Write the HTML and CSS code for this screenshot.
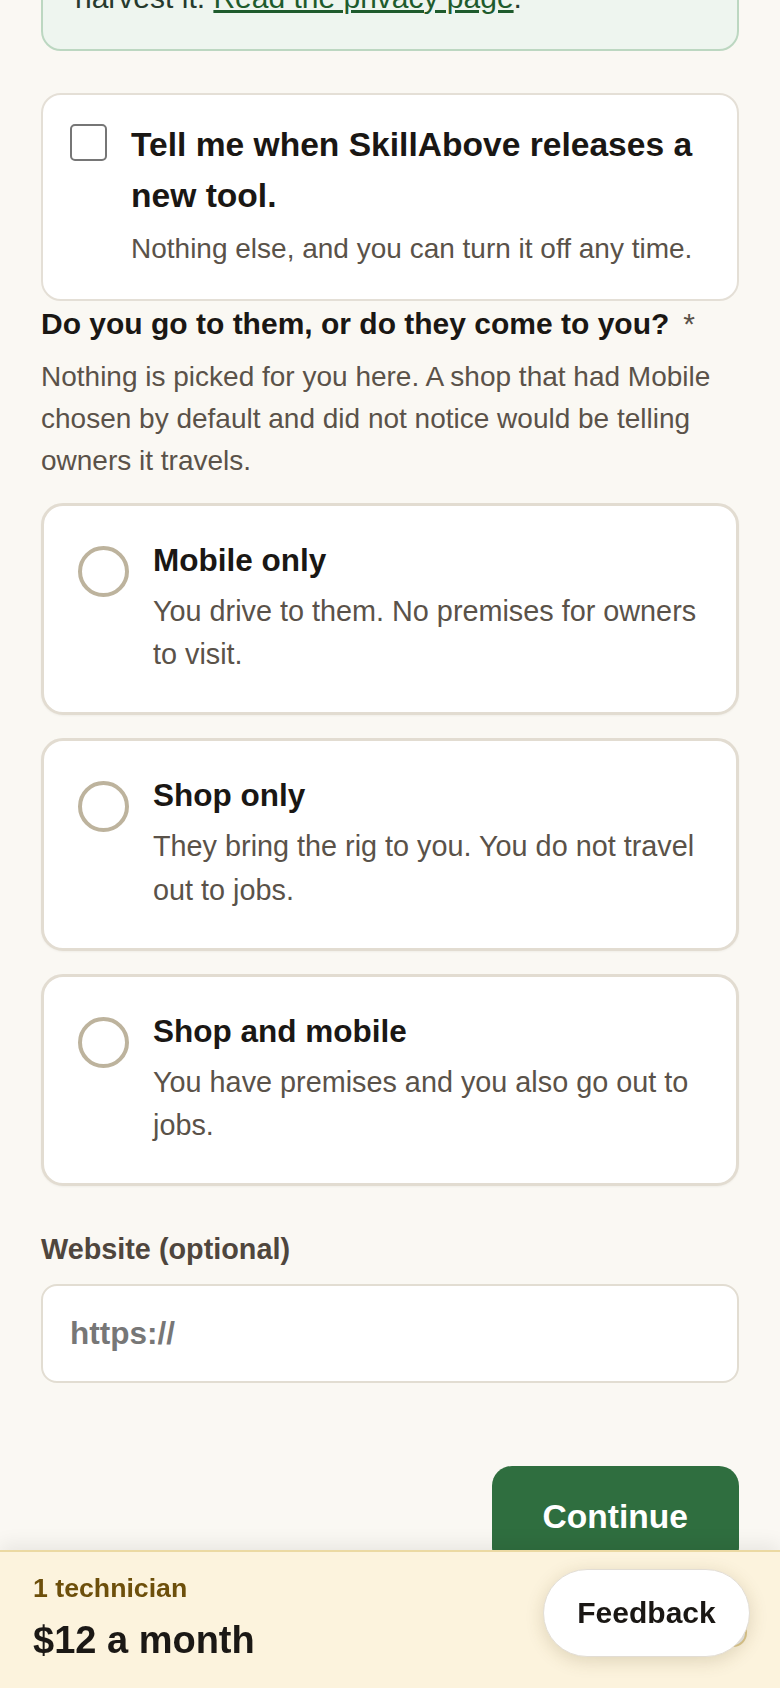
FILE: index.html
```html
<!DOCTYPE html>
<html lang="en">
<head>
<meta charset="utf-8">
<title>Your shop</title>
<link rel="stylesheet" href="styles.css">
</head>
<body>
<main class="page">
  <div class="notice">harvest it. <a href="#" class="notice-link">Read the privacy page</a>.</div>

  <label class="optin">
    <input type="checkbox" class="check">
    <span class="optin-body">
      <span class="optin-title">Tell me when SkillAbove releases a new tool.</span>
      <span class="optin-sub">Nothing else, and you can turn it off any time.</span>
    </span>
  </label>

  <h2 class="question">Do you go to them, or do they come to you?<span class="req">*</span></h2>
  <p class="hint">Nothing is picked for you here. A shop that had Mobile chosen by default and did not notice would be telling owners it travels.</p>

  <div class="options">
    <label class="option">
      <input type="radio" name="mode" class="radio">
      <span class="option-body">
        <span class="option-title">Mobile only</span>
        <span class="option-desc">You drive to them. No premises for owners to visit.</span>
      </span>
    </label>
    <label class="option">
      <input type="radio" name="mode" class="radio">
      <span class="option-body">
        <span class="option-title">Shop only</span>
        <span class="option-desc">They bring the rig to you. You do not travel out to jobs.</span>
      </span>
    </label>
    <label class="option">
      <input type="radio" name="mode" class="radio">
      <span class="option-body">
        <span class="option-title">Shop and mobile</span>
        <span class="option-desc">You have premises and you also go out to jobs.</span>
      </span>
    </label>
  </div>

  <label class="field-label" for="website">Website (optional)</label>
  <input id="website" class="field" type="text" placeholder="https://">

  <div class="actions">
    <button class="btn-primary" type="button">Continue</button>
  </div>
</main>

<footer class="bar">
  <div class="bar-info">
    <div class="bar-count">1 technician</div>
    <div class="bar-price">$12 a month</div>
  </div>
  <div class="bar-btn"></div>
</footer>

<button class="feedback" type="button">Feedback</button>
</body>
</html>
```

FILE: styles.css
```css
* { box-sizing: border-box; }

html, body {
  margin: 0;
  padding: 0;
}

body {
  background: #faf8f3;
  font-family: "Liberation Sans", Arial, sans-serif;
  color: #1a1714;
}

.page {
  padding: 0 41px 260px;
}

.notice {
  margin-top: -57px;
  background: #eef5ef;
  border: 2px solid #bcd7c1;
  border-radius: 20px;
  padding: 29.5px 32px;
  font-size: 30px;
  line-height: 45px;
  color: #263a2e;
}

.notice-link {
  color: #1e5b2d;
  text-decoration: underline;
}

.optin {
  margin-top: 42px;
  display: flex;
  gap: 24px;
  background: #fff;
  border: 2px solid #e4dfd6;
  border-radius: 20px;
  padding: 24px 28px 29px 27px;
}

.check {
  appearance: none;
  -webkit-appearance: none;
  flex: none;
  margin: 5px 0 0 0;
  width: 37px;
  height: 37px;
  border: 2.5px solid #767676;
  border-radius: 5px;
  background: #fff;
}

.optin-body {
  display: flex;
  flex-direction: column;
}

.optin-title {
  font-size: 33.6px;
  font-weight: 700;
  line-height: 51px;
  color: #1a1714;
}

.optin-sub {
  margin-top: 7px;
  font-size: 28px;
  line-height: 42px;
  color: #5a5249;
}

.question {
  margin: 3px 0 0;
  font-size: 30px;
  font-weight: 700;
  line-height: 39px;
  color: #1a1714;
}

.req {
  margin-left: 14px;
  font-weight: 400;
  color: #5a5249;
}

.hint {
  margin: 13px 0 0;
  font-size: 28px;
  line-height: 42px;
  color: #5a5249;
}

.options {
  margin-top: 21px;
  display: flex;
  flex-direction: column;
  gap: 23px;
}

.option {
  display: flex;
  gap: 24px;
  background: #fff;
  border: 3px solid #e2dcd1;
  border-radius: 22px;
  padding: 34px 24px 36px 34px;
  box-shadow: 0 1px 2px rgba(60, 50, 30, 0.05);
}

.radio {
  appearance: none;
  -webkit-appearance: none;
  flex: none;
  margin: 6px 0 0 0;
  width: 51px;
  height: 51px;
  border: 4px solid #bdb39d;
  border-radius: 50%;
  background: #fff;
}

.option-body {
  display: flex;
  flex-direction: column;
}

.option-title {
  font-size: 31.5px;
  font-weight: 700;
  line-height: 41px;
  color: #1a1714;
}

.option-desc {
  margin-top: 9px;
  font-size: 28.8px;
  line-height: 43.2px;
  color: #5a5249;
}

.field-label {
  display: block;
  margin-top: 45px;
  font-size: 28.8px;
  font-weight: 700;
  line-height: 37.4px;
  color: #4f463d;
}

.field {
  display: block;
  width: 100%;
  margin-top: 15px;
  height: 99px;
  border: 2px solid #e2ddd2;
  border-radius: 16px;
  background: #fff;
  padding: 0 26px 0 27px;
  font-family: "Liberation Sans", Arial, sans-serif;
  font-size: 31.5px;
  font-weight: 700;
  color: #1a1714;
  outline: none;
}

.field::placeholder {
  color: #777;
  opacity: 1;
}

.actions {
  margin-top: 83px;
  display: flex;
  justify-content: flex-end;
}

.btn-primary {
  border: none;
  background: #2f6e3f;
  color: #fff;
  font-family: "Liberation Sans", Arial, sans-serif;
  font-size: 33.6px;
  font-weight: 700;
  line-height: 40px;
  padding: 31px 51px;
  border-radius: 20px;
}

.bar {
  position: fixed;
  left: 0;
  right: 0;
  bottom: 0;
  height: 138px;
  background: #fcf3dd;
  border-top: 2px solid #ebd9a3;
  box-shadow: 0 -6px 18px rgba(0, 0, 0, 0.07);
  padding: 19px 33px 41px;
  display: flex;
  justify-content: space-between;
  align-items: flex-end;
}

.bar-info {
  align-self: flex-start;
}

.bar-count {
  font-size: 26.7px;
  font-weight: 700;
  line-height: 34.7px;
  color: #6d4f0b;
}

.bar-price {
  margin-top: 12px;
  font-size: 38px;
  font-weight: 700;
  line-height: 45px;
  color: #1b1815;
}

.bar-btn {
  width: 170px;
  height: 48px;
  background: #ebebeb;
  border: 2px solid #dcc78e;
  border-radius: 14px;
}

.feedback {
  position: fixed;
  right: 30px;
  bottom: 31px;
  width: 207px;
  height: 88px;
  border: 1px solid #e2ddd5;
  border-radius: 44px;
  background: #fff;
  box-shadow: 0 4px 18px rgba(90, 70, 20, 0.18);
  font-family: "Liberation Sans", Arial, sans-serif;
  font-size: 30px;
  font-weight: 700;
  color: #1a1714;
  padding: 0;
}
```
